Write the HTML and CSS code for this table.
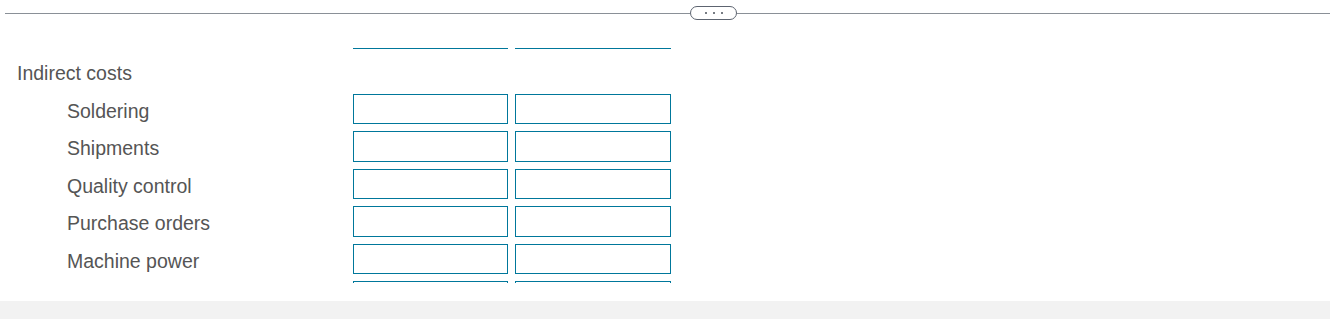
FILE: index.html
```html
<!DOCTYPE html>
<html lang="en">

<head>
  <meta charset="UTF-8" />
  <meta name="viewport" content="width=device-width, initial-scale=1" />
  <title>Activity costs</title>
  <link rel="stylesheet" href="styles.css">
</head>

<body>
  <div class="divider">
    <span class="rule rule-left"></span>
    <button class="more" aria-label="Show more">
      <span class="dot"></span><span class="dot"></span><span class="dot"></span>
    </button>
    <span class="rule rule-right"></span>
  </div>

  <div class="pane">
    <div class="sheet">
      <div class="row">
        <span class="label"></span>
        <input class="cell" type="text" />
        <input class="cell wide" type="text" />
      </div>
      <div class="row">
        <span class="label">Indirect costs</span>
      </div>
      <div class="row">
        <span class="label sub">Soldering</span>
        <input class="cell" type="text" />
        <input class="cell wide" type="text" />
      </div>
      <div class="row">
        <span class="label sub">Shipments</span>
        <input class="cell" type="text" />
        <input class="cell wide" type="text" />
      </div>
      <div class="row">
        <span class="label sub">Quality control</span>
        <input class="cell" type="text" />
        <input class="cell wide" type="text" />
      </div>
      <div class="row">
        <span class="label sub">Purchase orders</span>
        <input class="cell" type="text" />
        <input class="cell wide" type="text" />
      </div>
      <div class="row">
        <span class="label sub">Machine power</span>
        <input class="cell" type="text" />
        <input class="cell wide" type="text" />
      </div>
      <div class="row">
        <span class="label sub"></span>
        <input class="cell" type="text" />
        <input class="cell wide" type="text" />
      </div>
    </div>
  </div>

  <div class="footer"></div>
</body>

</html>
```

FILE: styles.css
```css
body {
  margin: 0;
  font-family: "Liberation Sans", Arial, sans-serif;
  background-color: white;
  color: #555;
}

/* top divider with the "more" pill */
.divider {
  display: flex;
  align-items: center;
  height: 26px;
  padding-left: 5px;
}

.rule {
  height: 1px;
  background-color: #8a9097;
}

.rule-left {
  width: 685px;
}

.rule-right {
  flex: 1;
}

.more {
  display: flex;
  justify-content: center;
  align-items: center;
  gap: 6px;
  width: 47px;
  height: 14px;
  padding: 0;
  border: 1px solid #5d6470;
  border-radius: 7px;
  background-color: white;
  cursor: pointer;
}

.dot {
  width: 2px;
  height: 2px;
  border-radius: 50%;
  background-color: #4a505a;
}

/* scrolled table of inputs */
.pane {
  margin-top: 22px;
  height: 235px;
  overflow: hidden;
}

.sheet {
  margin-top: -33px;
}

.row {
  display: flex;
  align-items: center;
  height: 37.5px;
}

.label {
  width: 336px;
  padding-left: 17px;
  padding-top: 5px;
  font-size: 19.5px;
  white-space: nowrap;
}

.label.sub {
  padding-left: 67px;
  width: 286px;
}

.cell {
  box-sizing: border-box;
  width: 154.5px;
  height: 30.5px;
  margin: 0 7px 0 0;
  padding: 0 6px;
  border: 1px solid #00779b;
  border-radius: 0;
  font-size: 16px;
  background-color: white;
}

.cell.wide {
  width: 156.5px;
}

.footer {
  margin-top: 18px;
  height: 18px;
  background-color: #f2f2f2;
}
```
